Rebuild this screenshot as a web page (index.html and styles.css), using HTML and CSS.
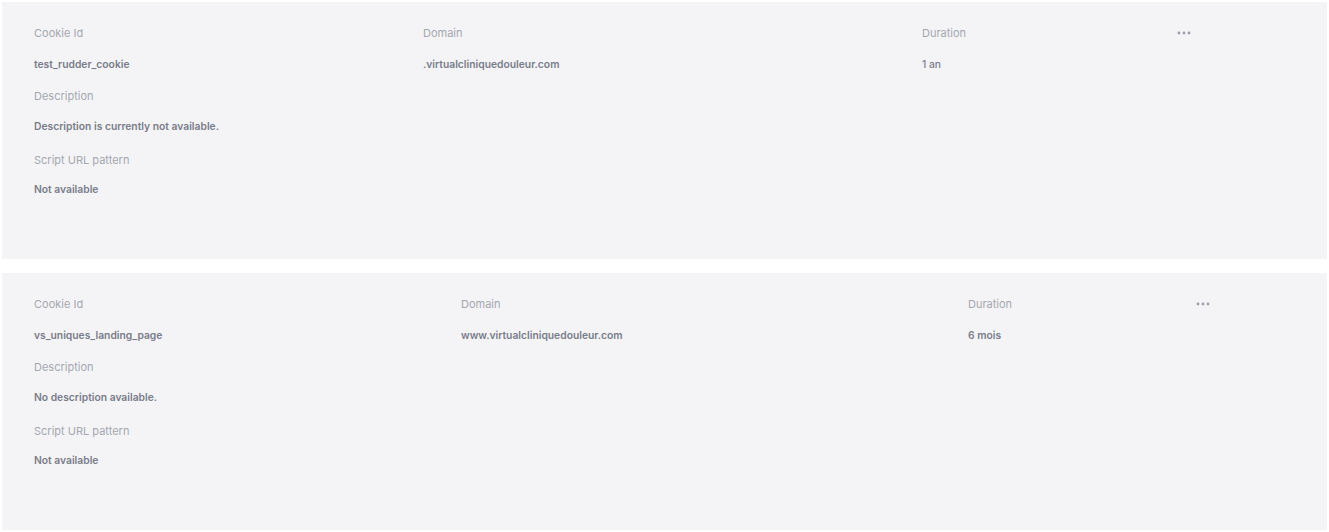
FILE: index.html
```html
<!DOCTYPE html>
<html lang="en">
<head>
  <meta charset="UTF-8">
  <title>Cookies</title>
  <link rel="stylesheet" href="styles.css">
</head>
<body>

  <div class="cookie-card">
    <div class="cookie-head cols-a">
      <div class="label">Cookie Id</div>
      <div class="label">Domain</div>
      <div class="label">Duration</div>
      <div class="more"><svg width="14" height="4" viewBox="0 0 14 4"><circle cx="2" cy="2" r="1.4"/><circle cx="7" cy="2" r="1.4"/><circle cx="12" cy="2" r="1.4"/></svg></div>
      <div class="value">test_rudder_cookie</div>
      <div class="value">.virtualcliniquedouleur.com</div>
      <div class="value light">1 an</div>
      <div></div>
    </div>
    <div class="field">
      <div class="label">Description</div>
      <div class="value">Description is currently not available.</div>
    </div>
    <div class="field">
      <div class="label">Script URL pattern</div>
      <div class="value">Not available</div>
    </div>
  </div>

  <div class="cookie-card">
    <div class="cookie-head cols-b">
      <div class="label">Cookie Id</div>
      <div class="label">Domain</div>
      <div class="label">Duration</div>
      <div class="more"><svg width="14" height="4" viewBox="0 0 14 4"><circle cx="2" cy="2" r="1.4"/><circle cx="7" cy="2" r="1.4"/><circle cx="12" cy="2" r="1.4"/></svg></div>
      <div class="value">vs_uniques_landing_page</div>
      <div class="value">www.virtualcliniquedouleur.com</div>
      <div class="value">6 mois</div>
      <div></div>
    </div>
    <div class="field">
      <div class="label">Description</div>
      <div class="value">No description available.</div>
    </div>
    <div class="field">
      <div class="label">Script URL pattern</div>
      <div class="value">Not available</div>
    </div>
  </div>

</body>
</html>
```

FILE: styles.css
```css
body {
  margin: 2px 2px;
  background: #fff;
  font-family: Inter, 'Noto Sans', sans-serif;
}

.cookie-card {
  background: #f4f4f6;
  padding: 22px 32px 61px;
  margin-bottom: 14px;
}

.cookie-head {
  display: grid;
  row-gap: 13px;
}

.cols-a {
  grid-template-columns: 389px 499px 255px auto;
}

.cols-b {
  grid-template-columns: 427px 507px 228px auto;
}

.label {
  font-size: 11px;
  line-height: 18px;
  color: #a5a7b0;
}

.value {
  font-size: 10.3px;
  line-height: 18px;
  font-weight: 600;
  color: #7a7c8a;
}

.value.light {
  font-weight: 500;
}

.more {
  line-height: 18px;
  display: flex;
  align-items: center;
}

.more svg {
  fill: #9c9eaa;
}

.field {
  margin-top: 14px;
}

.field .value {
  margin-top: 12px;
}

.field + .field {
  margin-top: 16px;
}

.field + .field .value {
  margin-top: 11px;
}
```
